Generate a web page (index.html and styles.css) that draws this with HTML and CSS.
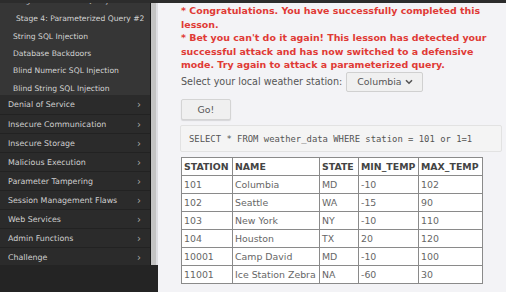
FILE: index.html
```html
<!DOCTYPE html>
<html>
<head>
<meta charset="utf-8">
<link rel="stylesheet" href="styles.css">
</head>
<body>
<div class="topbar"></div>
<div class="layout">
  <aside class="side">
    <div class="side-inner">
      <nav class="nav">
        <ul class="sub">
          <li class="cut">Stage 3: Numeric SQL Injection</li>
          <li class="sub-active">Stage 4: Parameterized Query #2</li>
          <li>String SQL Injection</li>
          <li>Database Backdoors</li>
          <li>Blind Numeric SQL Injection</li>
          <li class="last">Blind String SQL Injection</li>
        </ul>
        <ul class="menu">
          <li><span>Denial of Service</span><span class="chev">›</span></li>
          <li><span>Insecure Communication</span><span class="chev">›</span></li>
          <li><span>Insecure Storage</span><span class="chev">›</span></li>
          <li><span>Malicious Execution</span><span class="chev">›</span></li>
          <li><span>Parameter Tampering</span><span class="chev">›</span></li>
          <li><span>Session Management Flaws</span><span class="chev">›</span></li>
          <li><span>Web Services</span><span class="chev">›</span></li>
          <li><span>Admin Functions</span><span class="chev">›</span></li>
          <li><span>Challenge</span><span class="chev">›</span></li>
        </ul>
      </nav>
      <div class="track"></div>
    </div>
  </aside>
  <main class="main">
    <div class="msg">
      <p>* Congratulations. You have successfully completed this lesson.</p>
      <p>* Bet you can't do it again! This lesson has detected your successful attack and has now switched to a defensive mode. Try again to attack a parameterized query.</p>
    </div>
    <div class="form-row">
      <span class="label">Select your local weather station:</span>
      <span class="select">Columbia <svg class="caret" width="8" height="6" viewBox="0 0 8 6"><path d="M1 1.2 L4 4.2 L7 1.2" fill="none" stroke="#555" stroke-width="1.6"/></svg></span>
    </div>
    <div class="btn-row"><span class="btn">Go!</span></div>
    <div class="sql">SELECT * FROM weather_data WHERE station = 101 or 1=1</div>
    <table class="data">
      <thead>
        <tr><th class="c1">STATION</th><th class="c2">NAME</th><th class="c3">STATE</th><th class="c4">MIN_TEMP</th><th class="c5">MAX_TEMP</th></tr>
      </thead>
      <tbody>
        <tr><td>101</td><td>Columbia</td><td>MD</td><td>-10</td><td>102</td></tr>
        <tr><td>102</td><td>Seattle</td><td>WA</td><td>-15</td><td>90</td></tr>
        <tr><td>103</td><td>New York</td><td>NY</td><td>-10</td><td>110</td></tr>
        <tr><td>104</td><td>Houston</td><td>TX</td><td>20</td><td>120</td></tr>
        <tr><td>10001</td><td>Camp David</td><td>MD</td><td>-10</td><td>100</td></tr>
        <tr><td>11001</td><td>Ice Station Zebra</td><td>NA</td><td>-60</td><td>30</td></tr>
      </tbody>
    </table>
  </main>
</div>
</body>
</html>
```
FILE: styles.css
```css
html, body {
  margin: 0;
  padding: 0;
}
body {
  width: 506px;
  height: 292px;
  overflow: hidden;
  background: #f3f3f6;
  font-family: "DejaVu Sans", sans-serif;
}
.topbar {
  height: 3px;
  background: #2c2c2c;
}
.layout {
  display: flex;
  height: 289px;
}
.side {
  width: 158px;
  flex: none;
  background: #242424;
}
.side-inner {
  display: flex;
  height: 262px;
}
.nav {
  width: 150px;
  background: #2b2b2b;
  border-right: 1px solid #1a1a1a;
  overflow: hidden;
}
.track {
  flex: 1;
  background: linear-gradient(to right, #c4c4c4 0, #c4c4c4 5px, #dedee2 5px);
}
.sub {
  list-style: none;
  margin: -11px 0 0;
  padding: 0;
  background: #363636;
}
.sub li {
  height: 17.2px;
  line-height: 17px;
  padding-left: 13px;
  font-size: 7.6px;
  color: #d4d4d4;
  white-space: nowrap;
}
.sub li.cut {
  height: 16px;
}
.sub li.sub-active {
  padding-left: 16px;
  font-size: 7.6px;
  height: 20px;
  line-height: 22px;
}
.sub li.last {
  height: 15.5px;
}
.menu {
  list-style: none;
  margin: 0;
  padding: 0;
}
.menu li {
  display: flex;
  justify-content: space-between;
  align-items: center;
  height: 19px;
  padding: 0 9px 0 8px;
  font-size: 7.9px;
  color: #d0d0d0;
  border-top: 1px solid #222;
  box-sizing: border-box;
  white-space: nowrap;
}
.menu li:first-child {
  border-top: none;
}
.chev {
  color: #aaa;
  font-size: 10px;
}
.main {
  flex: 1;
  padding: 0 4px 0 23px;
  color: #555;
}
.msg {
  color: #e03a35;
  font-weight: bold;
  font-size: 9.45px;
  line-height: 13.5px;
  width: 312px;
  padding-top: 1px;
}
.msg p {
  margin: 0;
}
.form-row {
  display: flex;
  align-items: center;
  gap: 4px;
  height: 20px;
}
.label {
  font-size: 9.6px;
  color: #555;
}
.select {
  display: inline-flex;
  align-items: center;
  gap: 3px;
  height: 18px;
  padding: 0 9px 0 10px;
  border: 1px solid #d0d0d0;
  border-radius: 2px;
  background: #f0f0f0;
  font-size: 9.4px;
  color: #555;
}
.btn-row {
  margin-top: 6px;
  height: 21px;
}
.btn {
  display: inline-block;
  width: 48px;
  height: 19px;
  line-height: 19px;
  text-align: center;
  border: 1px solid #d4d4d4;
  border-radius: 2px;
  background: #f0f0f0;
  box-shadow: 0 1px 1px rgba(0,0,0,0.12);
  font-size: 9.4px;
  color: #555;
}
.sql {
  margin-top: 6px;
  margin-left: -1px;
  height: 27px;
  line-height: 27px;
  padding-left: 8px;
  background: #f4f4f4;
  border: 1px solid #e2e2e2;
  border-radius: 2px;
  font-family: "DejaVu Sans Mono", monospace;
  font-size: 8.9px;
  color: #555;
  box-sizing: border-box;
}
.data {
  margin-top: 5px;
  border-collapse: collapse;
  background: #fff;
  font-size: 9.4px;
  color: #666;
}
.data th, .data td {
  border: 1px solid #8a8a8a;
  height: 17px;
  padding: 0 2px;
  text-align: left;
  white-space: nowrap;
}
.data th {
  color: #444;
  font-weight: bold;
}
.c1 { width: 46px; }
.c2 { width: 82px; }
.c3 { width: 34px; }
.c4 { width: 55px; }
.c5 { width: 59px; }
```
